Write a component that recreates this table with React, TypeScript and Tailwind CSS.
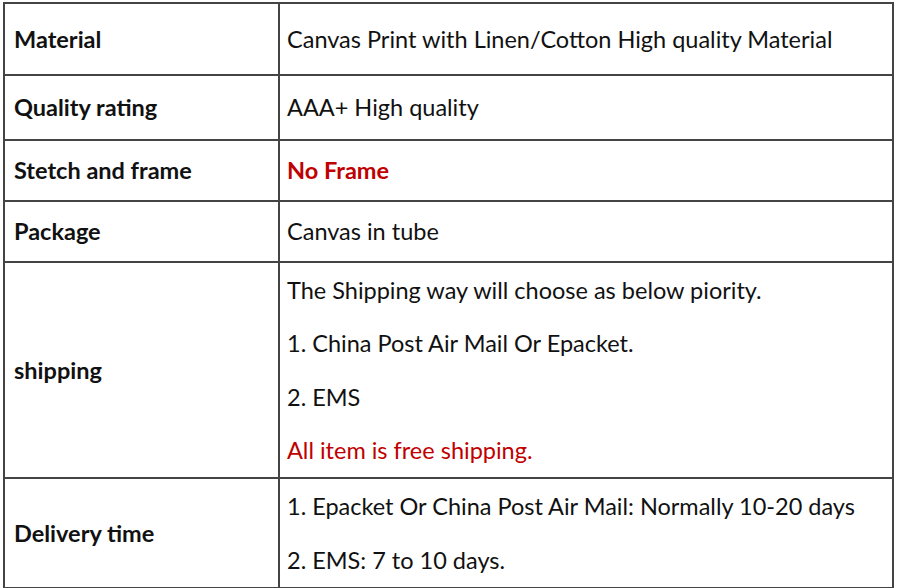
import React from "react";

type Row = {
  label: string;
  height: string;
  lines: { text: string; tone?: "red" | "redBold" }[];
};

const rows: Row[] = [
  {
    label: "Material",
    height: "h-[72px]",
    lines: [{ text: "Canvas Print with Linen/Cotton High quality Material" }],
  },
  { label: "Quality rating", height: "h-[65px]", lines: [{ text: "AAA+ High quality" }] },
  { label: "Stetch and frame", height: "h-[61px]", lines: [{ text: "No Frame", tone: "redBold" }] },
  { label: "Package", height: "h-[61px]", lines: [{ text: "Canvas in tube" }] },
  {
    label: "shipping",
    height: "h-[216px]",
    lines: [
      { text: "The Shipping way will choose as below piority." },
      { text: "1. China Post Air Mail Or Epacket." },
      { text: "2. EMS" },
      { text: "All item is free shipping.", tone: "red" },
    ],
  },
  {
    label: "Delivery time",
    height: "h-[108px]",
    lines: [
      { text: "1. Epacket Or China Post Air Mail: Normally 10-20 days" },
      { text: "2. EMS: 7 to 10 days." },
    ],
  },
];

export default function App() {
  return (
    <div className="w-[900px] h-[588px] bg-white pt-[2px] pl-[3px] font-['Lato','Open_Sans',sans-serif] text-[23.5px] leading-[1.2] text-[#111]">
      <div className="w-[891px] border-2 border-[#444]">
        {rows.map((row, i) => (
          <div
            key={row.label}
            className={`flex ${row.height} ${i < rows.length - 1 ? "border-b-2 border-[#444]" : ""}`}
          >
            {/* left label */}
            <div className="w-[275px] shrink-0 border-r-2 border-[#444] flex items-center pl-[9px] font-bold">
              {row.label}
            </div>
            {/* right value */}
            <div className="flex-1 flex flex-col justify-around pl-[7px]">
              {row.lines.map((l) => (
                <div
                  key={l.text}
                  className={
                    l.tone === "redBold"
                      ? "text-[#c00000] font-bold"
                      : l.tone === "red"
                      ? "text-[#c00000]"
                      : ""
                  }
                >
                  {l.text}
                </div>
              ))}
            </div>
          </div>
        ))}
      </div>
    </div>
  );
}
